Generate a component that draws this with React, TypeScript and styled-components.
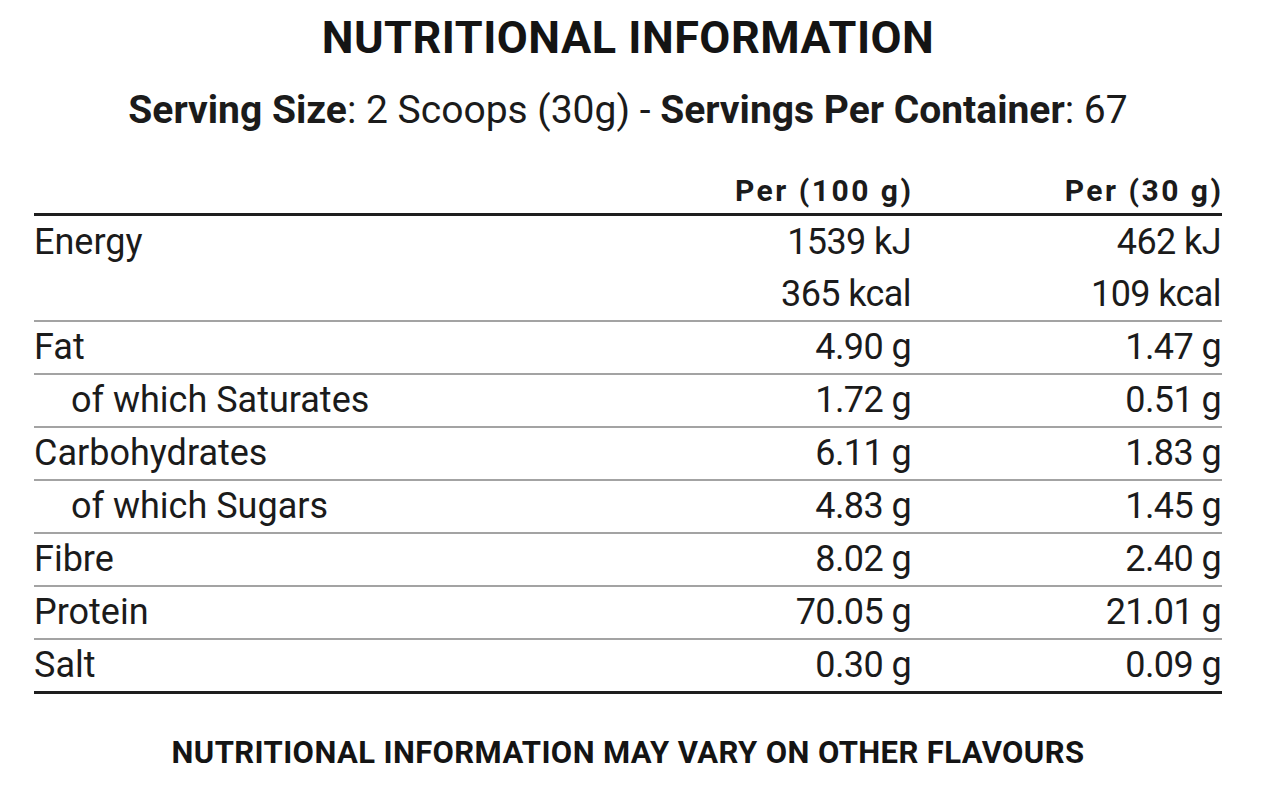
import React from "react";
import styled, { createGlobalStyle } from "styled-components";

const GlobalStyle = createGlobalStyle`
  html, body {
    margin: 0;
    padding: 0;
    background: #ffffff;
  }
  body {
    font-family: Roboto, "Liberation Sans", Arial, sans-serif;
    color: #1b1b1b;
  }
`;

const Page = styled.div`
  width: 1263px;
  height: 801px;
  box-sizing: border-box;
  padding: 15px 41px 0 34px;
  display: flex;
  flex-direction: column;
  align-items: center;
`;

const Title = styled.h1`
  margin: 0;
  font-size: 45px;
  line-height: 45px;
  font-weight: 700;
  letter-spacing: 0.5px;
  color: #141414;
`;

const Serving = styled.p`
  margin: 31px 0 0;
  font-size: 39px;
  line-height: 39px;
  font-weight: 400;
  white-space: nowrap;

  b {
    font-weight: 700;
  }
`;

const Table = styled.div`
  width: 100%;
  margin-top: 46px;
  display: flex;
  flex-direction: column;
  border-bottom: 3px solid #1e1e1e;
`;

const Row = styled.div<{ $head?: boolean }>`
  display: grid;
  grid-template-columns: 1fr 310px 310px;
  align-items: start;
  padding-right: 1px;
  border-bottom: ${(p) => (p.$head ? "3px solid #1e1e1e" : "2px solid #a3a3a3")};

  &:last-child {
    border-bottom: none;
  }
`;

const HeadCell = styled.div`
  grid-column: ${(p: { $col: number }) => p.$col};
  text-align: right;
  font-size: 30px;
  line-height: 30px;
  font-weight: 700;
  letter-spacing: 2.5px;
  margin-right: -2.5px;
  padding-bottom: 7px;
`;

const Label = styled.div<{ $sub?: boolean; $tall?: boolean }>`
  font-size: 36px;
  line-height: ${(p) => (p.$tall ? "52px" : "51px")};
  padding-left: ${(p) => (p.$sub ? "37px" : "0")};
  white-space: nowrap;
`;

const Value = styled.div<{ $tall?: boolean }>`
  font-size: 36px;
  line-height: ${(p) => (p.$tall ? "52px" : "51px")};
  text-align: right;
  white-space: nowrap;
  letter-spacing: -0.6px;
`;

const Footer = styled.p`
  margin: 43px 0 0;
  font-size: 31px;
  line-height: 31px;
  font-weight: 700;
  letter-spacing: 0.4px;
  white-space: nowrap;
  color: #141414;
`;

type Nutrient = {
  name: string;
  sub?: boolean;
  per100: string;
  perServing: string;
};

const nutrients: Nutrient[] = [
  { name: "Fat", per100: "4.90 g", perServing: "1.47 g" },
  { name: "of which Saturates", sub: true, per100: "1.72 g", perServing: "0.51 g" },
  { name: "Carbohydrates", per100: "6.11 g", perServing: "1.83 g" },
  { name: "of which Sugars", sub: true, per100: "4.83 g", perServing: "1.45 g" },
  { name: "Fibre", per100: "8.02 g", perServing: "2.40 g" },
  { name: "Protein", per100: "70.05 g", perServing: "21.01 g" },
  { name: "Salt", per100: "0.30 g", perServing: "0.09 g" },
];

export default function App() {
  return (
    <>
      <GlobalStyle />
      <Page>
        <Title>NUTRITIONAL INFORMATION</Title>
        <Serving>
          <b>Serving Size</b>: 2 Scoops (30g) - <b>Servings Per Container</b>: 67
        </Serving>

        <Table>
          <Row $head>
            <HeadCell $col={2}>Per (100 g)</HeadCell>
            <HeadCell $col={3}>Per (30 g)</HeadCell>
          </Row>
          <Row>
            <Label $tall>Energy</Label>
            <div>
              <Value $tall>1539 kJ</Value>
              <Value $tall>365 kcal</Value>
            </div>
            <div>
              <Value $tall>462 kJ</Value>
              <Value $tall>109 kcal</Value>
            </div>
          </Row>
          {nutrients.map((n) => (
            <Row key={n.name}>
              <Label $sub={n.sub}>{n.name}</Label>
              <Value>{n.per100}</Value>
              <Value>{n.perServing}</Value>
            </Row>
          ))}
        </Table>

        <Footer>NUTRITIONAL INFORMATION MAY VARY ON OTHER FLAVOURS</Footer>
      </Page>
    </>
  );
}
